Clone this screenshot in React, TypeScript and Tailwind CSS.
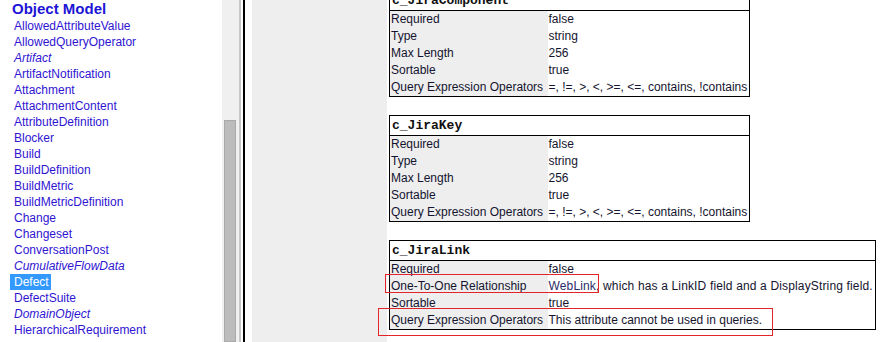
import React from 'react'

const navItems: { name: string; italic?: boolean; selected?: boolean }[] = [
  { name: 'AllowedAttributeValue' },
  { name: 'AllowedQueryOperator' },
  { name: 'Artifact', italic: true },
  { name: 'ArtifactNotification' },
  { name: 'Attachment' },
  { name: 'AttachmentContent' },
  { name: 'AttributeDefinition' },
  { name: 'Blocker' },
  { name: 'Build' },
  { name: 'BuildDefinition' },
  { name: 'BuildMetric' },
  { name: 'BuildMetricDefinition' },
  { name: 'Change' },
  { name: 'Changeset' },
  { name: 'ConversationPost' },
  { name: 'CumulativeFlowData', italic: true },
  { name: 'Defect', selected: true },
  { name: 'DefectSuite' },
  { name: 'DomainObject', italic: true },
  { name: 'HierarchicalRequirement' },
]

const ops = '=, !=, >, <, >=, <=, contains, !contains'

type Row = { label: string; value: React.ReactNode }

const attributes: { name: string; rows: Row[]; first?: boolean }[] = [
  {
    name: 'c_JiraComponent',
    first: true,
    rows: [
      { label: 'Required', value: 'false' },
      { label: 'Type', value: 'string' },
      { label: 'Max Length', value: '256' },
      { label: 'Sortable', value: 'true' },
      { label: 'Query Expression Operators', value: ops },
    ],
  },
  {
    name: 'c_JiraKey',
    rows: [
      { label: 'Required', value: 'false' },
      { label: 'Type', value: 'string' },
      { label: 'Max Length', value: '256' },
      { label: 'Sortable', value: 'true' },
      { label: 'Query Expression Operators', value: ops },
    ],
  },
  {
    name: 'c_JiraLink',
    rows: [
      { label: 'Required', value: 'false' },
      {
        label: 'One-To-One Relationship',
        value: (
          <span className="tracking-[0.15px]">
            <span className="text-[#2c2c6a]">WebLink</span>, which has a LinkID field and a DisplayString field.
          </span>
        ),
      },
      { label: 'Sortable', value: 'true' },
      { label: 'Query Expression Operators', value: 'This attribute cannot be used in queries.' },
    ],
  },
]

const AttributeTable = ({ name, rows, first }: { name: string; rows: Row[]; first?: boolean }) => (
  <table
    className={`w-max border-collapse border border-black text-[12px] leading-[17px] text-[#14142e] ${
      first ? 'mt-[-10px]' : 'mt-[18px]'
    }`}
  >
    <tbody>
      <tr>
        <td
          colSpan={2}
          className="h-[19px] border-b border-black bg-white px-[2px] font-['Liberation_Mono',monospace] text-[13px] font-bold leading-[19px] text-[#111]"
        >
          {name}
        </td>
      </tr>
      {rows.map((r) => (
        <tr key={r.label} className="h-[17px]">
          <td className="w-[158px] bg-[#eeeeee] px-[1px] whitespace-nowrap">{r.label}</td>
          <td className="bg-white pl-[1px] pr-[2px] whitespace-nowrap">{r.value}</td>
        </tr>
      ))}
    </tbody>
  </table>
)

export default function App() {
  return (
    <div className="relative flex h-[342px] w-[884px] overflow-hidden bg-white font-['Liberation_Sans',Arial,sans-serif]">
      {/* left nav */}
      <div className="w-[222px] shrink-0 overflow-hidden bg-white">
        <div className="pl-[12px] text-[15px] font-bold leading-[18px] text-[#1d14d6]">Object Model</div>
        <ul className="text-[12px] leading-[16px] text-[#2f14d2]">
          {navItems.map((it) => (
            <li key={it.name} className="flex">
              <span
                className={`ml-[10px] pl-[4px] pr-[2px] whitespace-nowrap ${it.italic ? 'italic' : ''} ${
                  it.selected ? 'bg-[#3399ff] text-white' : ''
                }`}
              >
                {it.name}
              </span>
            </li>
          ))}
        </ul>
      </div>

      {/* scrollbar */}
      <div className="flex w-[17px] shrink-0 flex-col bg-[#f0f0f0] pt-[120px] pl-[2px] pr-[3px]">
        <div className="flex-1 border border-[#a9a9a9] bg-[#bcbcbc]" />
      </div>

      {/* splitter */}
      <div className="w-[2px] shrink-0 bg-[#c8c8c8]" />
      <div className="w-[2px] shrink-0 bg-white" />
      <div className="w-[2px] shrink-0 bg-black" />
      <div className="w-[7px] shrink-0 bg-white" />

      {/* content */}
      <div className="flex flex-1 bg-white">
        <div className="w-[135px] shrink-0 bg-[#eeeeee]" />
        <div className="flex flex-col pl-[2px]">
          {attributes.map((a) => (
            <AttributeTable key={a.name} name={a.name} rows={a.rows} first={a.first} />
          ))}
        </div>
      </div>

      {/* annotation boxes */}
      <div className="absolute left-[385px] top-[274px] h-[19px] w-[214px] border border-[#e3242b]" />
      <div className="absolute left-[378px] top-[308px] h-[28px] w-[395px] border border-[#e3242b]" />
    </div>
  )
}
